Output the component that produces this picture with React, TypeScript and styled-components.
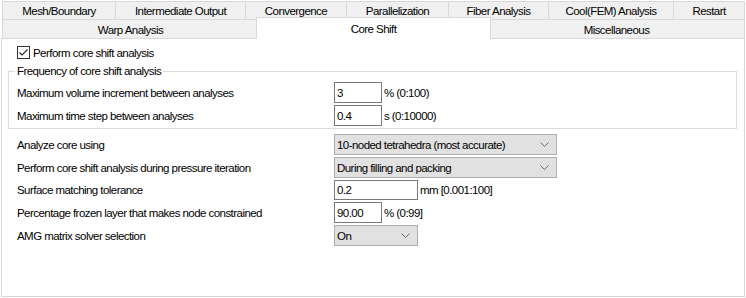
import React from 'react';
import styled, { createGlobalStyle } from 'styled-components';

const GlobalStyle = createGlobalStyle`
  html, body { margin: 0; padding: 0; background: #ffffff; }
  body {
    font-family: "Liberation Sans", Arial, sans-serif;
    font-size: 11.5px;
    letter-spacing: -0.55px;
    color: #000000;
  }
  * { box-sizing: border-box; }
`;

const Window = styled.div`
  width: 746px;
  height: 298px;
  padding-top: 1px;
  display: flex;
  flex-direction: column;
  background: #ffffff;
`;

const TabRow = styled.div`
  display: flex;
  align-items: flex-start;
  padding-left: 2px;
`;

const Tab = styled.div<{ $w: number; $row: 1 | 2 }>`
  flex: 0 0 ${(p) => p.$w}px;
  height: ${(p) => (p.$row === 1 ? 18 : 19)}px;
  margin-right: -1px;
  border: 1px solid #d9d9d9;
  border-bottom: none;
  background: #f0f0f0;
  display: flex;
  align-items: center;
  justify-content: center;
  padding-top: 1px;
  white-space: nowrap;
`;

const ActiveTab = styled(Tab)`
  flex-basis: ${(p) => p.$w + 4}px;
  height: 22px;
  margin: -2px -3px -1px -2px;
  padding-top: 0;
  background: #ffffff;
  position: relative;
  z-index: 2;
`;

const Panel = styled.div`
  margin-left: 1px;
  width: 744px;
  height: 259px;
  border: 1px solid #d9d9d9;
  background: #ffffff;
  padding: 7px 4px 0 6px;
  display: flex;
  flex-direction: column;
`;

const CheckRow = styled.label`
  display: flex;
  align-items: center;
  gap: 3px;
  height: 13px;
  margin-left: 9px;
`;

const Group = styled.fieldset`
  margin: 5px 3px 0 0;
  padding: 4px 8px 2px 8px;
  border: 1px solid #dcdcdc;
  min-width: 0;
`;

const Legend = styled.legend`
  padding: 0 2px;
  margin-left: -2px;
  line-height: 14px;
  height: 14px;
`;

const FormGrid = styled.div<{ $rows: string }>`
  display: grid;
  grid-template-columns: 317px auto;
  grid-template-rows: ${(p) => p.$rows};
  row-gap: 2px;
  align-items: center;
`;

const Lower = styled.div`
  margin: 5px 0 0 9px;
`;

const Label = styled.span`
  white-space: nowrap;
`;

const Cell = styled.div`
  display: flex;
  align-items: center;
  gap: 2px;
  height: 100%;
  white-space: nowrap;
`;

const TextBox = styled.div<{ $w: number }>`
  width: ${(p) => p.$w}px;
  height: 100%;
  border: 1px solid #7a7a7a;
  background: #ffffff;
  padding-left: 2px;
  display: flex;
  align-items: center;
`;

const Combo = styled.div<{ $w: number }>`
  width: ${(p) => p.$w}px;
  height: 100%;
  border: 1px solid #adadad;
  background: #e1e1e1;
  padding: 0 7px 0 2px;
  display: flex;
  align-items: center;
  justify-content: space-between;
`;

const Chevron = () => (
  <svg width="9" height="5" viewBox="0 0 9 5">
    <polyline points="0.5,0.5 4.5,4.5 8.5,0.5" fill="none" stroke="#6a6a6a" strokeWidth="1" />
  </svg>
);

const CheckBox = () => (
  <svg width="13" height="13" viewBox="0 0 13 13">
    <rect x="0.5" y="0.5" width="12" height="12" fill="#ffffff" stroke="#333333" />
    <polyline points="2.5,6.5 5,9 10.5,3.5" fill="none" stroke="#222222" strokeWidth="1.1" />
  </svg>
);

const row1 = [
  { t: 'Mesh/Boundary', w: 114 },
  { t: 'Intermediate Output', w: 131 },
  { t: 'Convergence', w: 102 },
  { t: 'Parallelization', w: 103 },
  { t: 'Fiber Analysis', w: 101 },
  { t: 'Cool(FEM) Analysis', w: 126 },
  { t: 'Restart', w: 72 },
];

const row2 = [
  { t: 'Warp Analysis', w: 257, active: false },
  { t: 'Core Shift', w: 231, active: true },
  { t: 'Miscellaneous', w: 257, active: false },
];

export default function App() {
  return (
    <>
      <GlobalStyle />
      <Window>
        <TabRow>
          {row1.map((t) => (
            <Tab key={t.t} $w={t.w} $row={1}>
              {t.t}
            </Tab>
          ))}
        </TabRow>
        <TabRow>
          {row2.map((t) =>
            t.active ? (
              <ActiveTab key={t.t} $w={t.w} $row={2}>
                {t.t}
              </ActiveTab>
            ) : (
              <Tab key={t.t} $w={t.w} $row={2}>
                {t.t}
              </Tab>
            )
          )}
        </TabRow>
        <Panel>
          <CheckRow>
            <CheckBox />
            <span>Perform core shift analysis</span>
          </CheckRow>
          <Group>
            <Legend>Frequency of core shift analysis</Legend>
            <FormGrid $rows="21px 21px">
              <Label>Maximum volume increment between analyses</Label>
              <Cell>
                <TextBox $w={48}>3</TextBox>
                <span>% (0:100)</span>
              </Cell>
              <Label>Maximum time step between analyses</Label>
              <Cell>
                <TextBox $w={48}>0.4</TextBox>
                <span>s (0:10000)</span>
              </Cell>
            </FormGrid>
          </Group>
          <Lower>
            <FormGrid $rows="21px 21px 20px 21px 21px">
              <Label>Analyze core using</Label>
              <Cell>
                <Combo $w={223}>
                  <span>10-noded tetrahedra (most accurate)</span>
                  <Chevron />
                </Combo>
              </Cell>
              <Label>Perform core shift analysis during pressure iteration</Label>
              <Cell>
                <Combo $w={223}>
                  <span>During filling and packing</span>
                  <Chevron />
                </Combo>
              </Cell>
              <Label>Surface matching tolerance</Label>
              <Cell>
                <TextBox $w={84}>0.2</TextBox>
                <span>mm [0.001:100]</span>
              </Cell>
              <Label>Percentage frozen layer that makes node constrained</Label>
              <Cell>
                <TextBox $w={48}>90.00</TextBox>
                <span>% (0:99]</span>
              </Cell>
              <Label>AMG matrix solver selection</Label>
              <Cell>
                <Combo $w={84}>
                  <span>On</span>
                  <Chevron />
                </Combo>
              </Cell>
            </FormGrid>
          </Lower>
        </Panel>
      </Window>
    </>
  );
}
